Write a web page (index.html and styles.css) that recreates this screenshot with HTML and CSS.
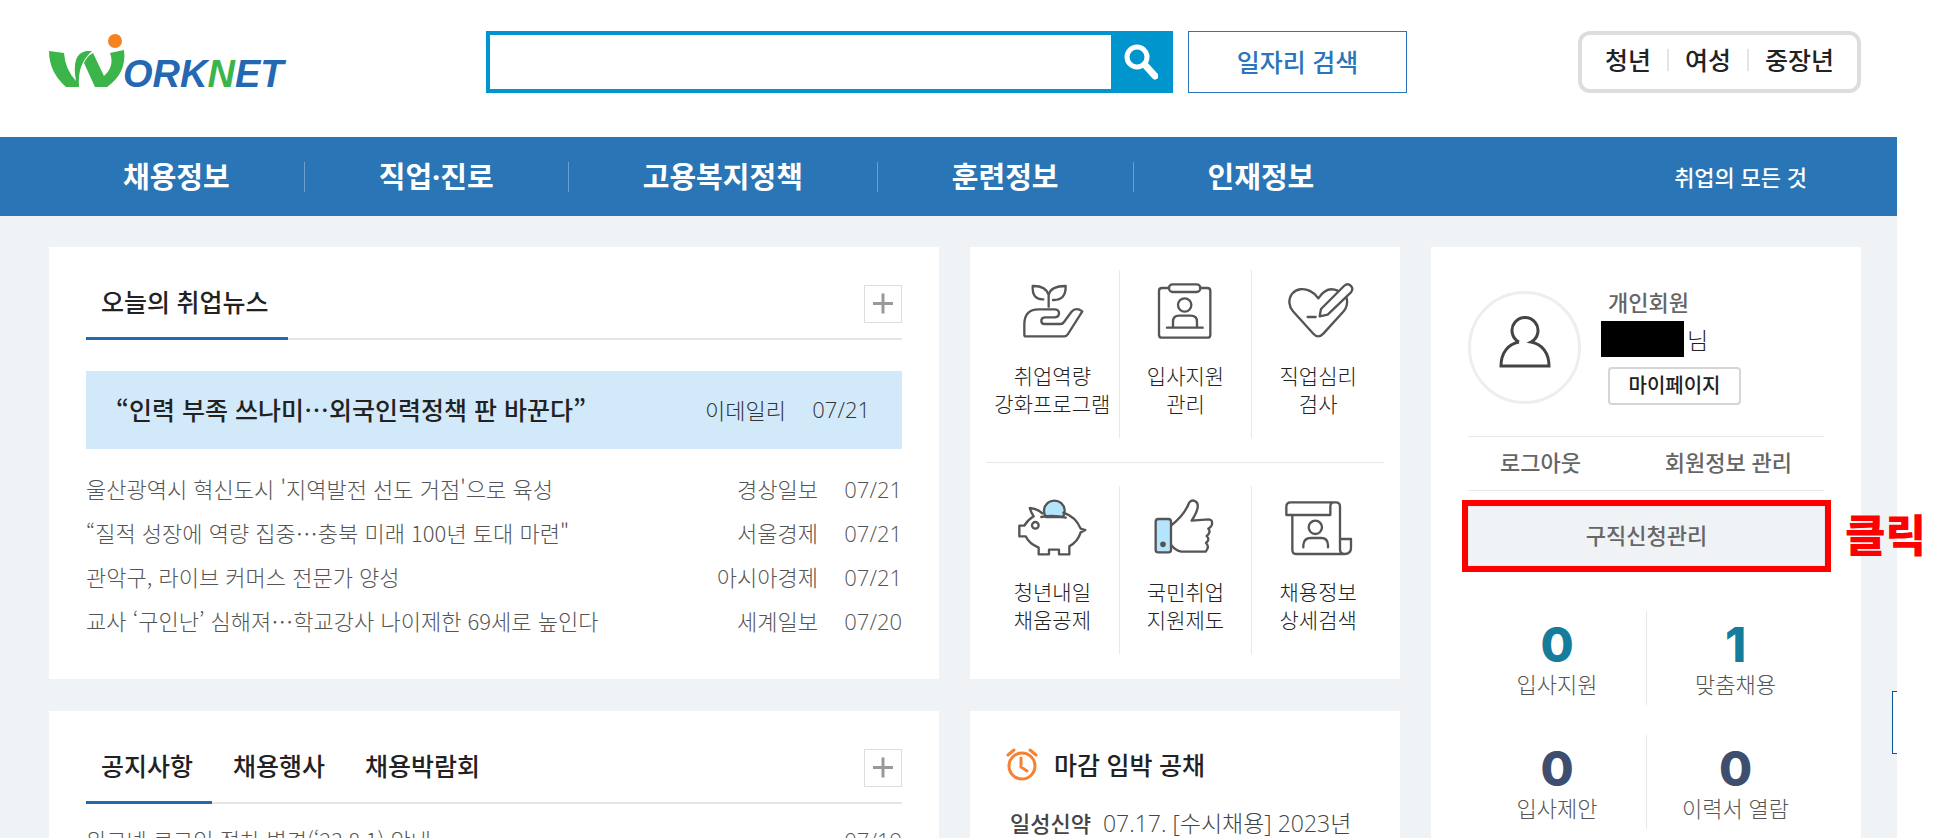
FILE: index.html
```html
<!DOCTYPE html>
<html lang="ko">
<head>
    <meta charset="utf-8">
    <title>워크넷</title>
    <link rel="stylesheet" href="styles.css">
</head>
<body>
    <header class="header">
        <a class="logo" href="#" aria-label="WORKNET">
            <svg width="240" height="60" viewBox="0 -2 240 60">
                <path fill="#3bb54a" d="M0 17 L15 19 Q16 35 27 47 Q22 20 37 17 L43 17 Q28 30 30 53 L17 53 Q0 38 0 17Z"/>
                <path fill="#3bb54a" d="M35 29 Q38 22 44 19 L55 42 Q66 32 61 19 L75 16 Q78 39 58 53 L46 53Z"/>
                <circle cx="66" cy="7" r="7" fill="#f58220"/>
                <text x="74" y="53" fill="#2468b3">ORK<tspan fill="#3bb54a">N</tspan>ET</text>
            </svg>
        </a>
        <form class="search">
            <input type="text" aria-label="검색어">
            <button type="button" aria-label="검색">
                <svg width="36" height="36" viewBox="0 0 36 36" fill="none" stroke="#fff">
                    <circle cx="15" cy="13" r="10" stroke-width="5"/>
                    <path d="M23 21 L33 32" stroke-width="7" stroke-linecap="round"/>
                </svg>
            </button>
        </form>
        <button type="button" class="job-search">일자리 검색</button>
        <div class="groups">
            <a href="#">청년</a>
            <a href="#">여성</a>
            <a href="#">중장년</a>
        </div>
    </header>

    <nav class="nav">
        <ul>
            <li><a href="#">채용정보</a></li>
            <li><a href="#">직업·진로</a></li>
            <li><a href="#">고용복지정책</a></li>
            <li><a href="#">훈련정보</a></li>
            <li><a href="#">인재정보</a></li>
        </ul>
        <a class="nav-all" href="#">취업의 모든 것</a>
    </nav>

    <main class="main">
        <section class="card news">
            <div class="card-head">
                <a class="tab active" href="#">오늘의 취업뉴스</a>
                <button type="button" class="more" aria-label="더보기"></button>
            </div>
            <a class="headline" href="#">
                <strong>“인력 부족 쓰나미⋯외국인력정책 판 바꾼다”</strong>
                <span class="source">이데일리</span>
                <span class="date">07/21</span>
            </a>
            <ul class="list">
                <li><a href="#">울산광역시 혁신도시 '지역발전 선도 거점'으로 육성</a><span class="source">경상일보</span><span class="date">07/21</span></li>
                <li><a href="#">“질적 성장에 역량 집중⋯충북 미래 100년 토대 마련"</a><span class="source">서울경제</span><span class="date">07/21</span></li>
                <li><a href="#">관악구, 라이브 커머스 전문가 양성</a><span class="source">아시아경제</span><span class="date">07/21</span></li>
                <li><a href="#">교사 ‘구인난’ 심해져⋯학교강사 나이제한 69세로 높인다</a><span class="source">세계일보</span><span class="date">07/20</span></li>
            </ul>
        </section>

        <section class="card services">
            <div class="service-row">
                <a href="#">
                    <svg viewBox="168 126 216 180">
                        <path d="M266 200 V165 Q258 137 218 138 Q216 180 250 178 M266 165 Q272 138 317 138 Q318 182 279 180"/>
                        <path d="M193 284 V250 Q195 208 235 208 H285 Q297 209 297 220 Q297 231 285 232 H254 Q244 233 244 242 Q244 252 254 252 H302 Q308 252 312 246 L334 216 Q347 200 367 214 L324 282 Q320 289 313 289 H198 Q193 289 193 284Z"/>
                    </svg>
                    취업역량<br>강화프로그램
                </a>
                <a href="#">
                    <svg viewBox="565 126 216 180">
                        <path d="M625 144 H604 Q595 144 595 153 V284 Q595 293 604 293 H740 Q749 293 749 284 V153 Q749 144 740 144 H718"/>
                        <rect x="625" y="133" width="94" height="23" rx="11"/>
                        <circle cx="672" cy="195" r="20"/>
                        <path d="M619 263 H726 M637 262 V245 Q637 227 655 227 H690 Q709 227 709 245 V262"/>
                    </svg>
                    입사지원<br>관리
                </a>
                <a href="#">
                    <svg viewBox="964 126 216 180">
                        <path d="M1131 152 Q1098 137 1073 175 C1045 133 986 140 986 188 Q987 202 997 214 L1058 281 Q1073 297 1088 281 L1149 214 Q1163 197 1158 174"/>
                        <path d="M1077 229 L1081 207 L1150 138 Q1161 128 1170 137 Q1180 147 1170 158 L1101 224Z M1041 231 H1065"/>
                    </svg>
                    직업심리<br>검사
                </a>
            </div>
            <div class="service-row">
                <a href="#">
                    <svg viewBox="168 147 216 180">
                        <path d="M258 204 A31 31 0 1 1 308 204Z" fill="#b3e5fc"/>
                        <path d="M244 204 Q280 196 317 206 M310 191 Q347 203 362 239 L376 243 L362 250 Q354 277 328 292 V316 H297 V302 H267 V316 H236 V296 Q207 284 197 262 H178 V230 H193 Q203 213 221 202 Q213 190 209 177 Q231 178 247 193"/>
                        <circle cx="226" cy="229" r="10"/>
                    </svg>
                    청년내일<br>채움공제
                </a>
                <a href="#">
                    <svg viewBox="565 147 216 180">
                        <rect x="585" y="210" width="46" height="100" rx="8" fill="#b3e5fc"/>
                        <circle cx="607" cy="286" r="5" fill="#555"/>
                        <path d="M632 229 Q672 197 685 162 Q692 150 704 157 Q723 168 693 215 L744 211 Q756 211 754 227 Q750 237 743 239 Q752 250 738 261 Q749 271 736 282 Q748 293 735 308 H662 Q645 305 632 289"/>
                    </svg>
                    국민취업<br>지원제도
                </a>
                <a href="#">
                    <svg viewBox="964 147 216 180">
                        <path d="M977 198 V173 Q977 160 990 160 H1126 Q1138 160 1138 173 V302 Q1139 315 1151 315 H1008 Q995 315 995 302 V198 M977 198 H1109 V173 Q1109 161 1119 160 M1138 270 H1171 V297 Q1171 315 1151 315"/>
                        <circle cx="1064" cy="235" r="20"/>
                        <path d="M1028 295 V288 Q1030 267 1050 267 H1082 Q1101 267 1102 288 V295"/>
                    </svg>
                    채용정보<br>상세검색
                </a>
            </div>
        </section>

        <aside class="card member">
            <div class="profile">
                <div class="avatar">
                    <svg width="52" height="52" viewBox="0 0 52 52">
                        <path d="M20 26 A13 13 0 1 1 32 26 C43 28 50 37 50 50 H2 C2 37 9 28 20 26"/>
                    </svg>
                </div>
                <div class="profile-info">
                    <span class="type">개인회원</span>
                    <div class="name"><i></i>님</div>
                    <button type="button" class="mypage">마이페이지</button>
                </div>
            </div>
            <div class="account">
                <a href="#">로그아웃</a>
                <a href="#">회원정보 관리</a>
            </div>
            <div class="apply">
                <button type="button">구직신청관리</button>
                <span class="click">클릭</span>
            </div>
            <div class="stats">
                <a href="#"><b>0</b>입사지원</a>
                <a href="#"><b>1</b>맞춤채용</a>
                <a class="dark" href="#"><b>0</b>입사제안</a>
                <a class="dark" href="#"><b>0</b>이력서 열람</a>
            </div>
        </aside>

        <section class="card notice">
            <div class="card-head">
                <a class="tab active" href="#">공지사항</a>
                <a class="tab" href="#">채용행사</a>
                <a class="tab" href="#">채용박람회</a>
                <button type="button" class="more" aria-label="더보기"></button>
            </div>
            <ul class="list">
                <li><a href="#">워크넷 로그인 절차 변경(‘23.8.1) 안내</a><span class="date">07/19</span></li>
            </ul>
        </section>

        <section class="card deadline">
            <h2>
                <svg width="32" height="34" viewBox="0 0 32 34">
                    <circle cx="16" cy="18" r="13"/>
                    <path d="M15 10 V19 L21 23 M2 7 L8 2 M30 7 L24 2"/>
                </svg>
                마감 임박 공채
            </h2>
            <p><strong>일성신약</strong> 07.17. [수시채용] 2023년</p>
        </section>

        <div class="side-tab"></div>
    </main>
</body>
</html>
```
FILE: styles.css
```css
* {
    box-sizing: border-box;
}
html, body {
    height: 100%;
    overflow: hidden;
}
body {
    margin: 0;
    padding-right: 55px;
    background: #fff;
    color: #222;
    font: 22px "Open Sans", "Noto Sans CJK KR", sans-serif;
    display: flex;
    flex-direction: column;
}
a {
    color: inherit;
    text-decoration: none;
}
ul {
    list-style: none;
    margin: 0;
    padding: 0;
}
button {
    font: inherit;
    padding: 0;
    background: #fff;
    cursor: pointer;
}

/* header */
.header {
    display: flex;
    align-items: center;
    flex-shrink: 0;
    height: 137px;
    padding: 0 36px 13px 49px;
}
.logo {
    width: 240px;
    margin-right: 197px;
}
.logo svg {
    display: block;
    overflow: visible;
}
.logo text {
    font: italic bold 38px "Liberation Sans", sans-serif;
}
.search {
    display: flex;
    flex: 1;
    height: 62px;
    border: 4px solid #0095cc;
}
.search input {
    flex: 1;
    min-width: 0;
    border: 0;
    padding: 0 16px;
    font: inherit;
    outline: none;
}
.search button {
    display: flex;
    align-items: center;
    justify-content: center;
    width: 58px;
    border: 0;
    background: #0095cc;
}
.job-search {
    width: 219px;
    height: 62px;
    margin: 0 171px 0 15px;
    border: 1px solid #2a75bb;
    color: #2a75bb;
    font-size: 25px;
    font-weight: 500;
    line-height: 56px;
}
.groups {
    display: flex;
    align-items: center;
    justify-content: center;
    width: 283px;
    height: 62px;
    padding-bottom: 4px;
    border: 4px solid #ddd;
    border-radius: 12px;
    font-size: 25px;
    font-weight: 500;
}
.groups a {
    padding: 0 16px;
    line-height: 22px;
}
.groups a + a {
    border-left: 2px solid #e5e5e5;
}

/* nav */
.nav {
    display: flex;
    align-items: center;
    justify-content: space-between;
    flex-shrink: 0;
    height: 79px;
    padding: 0 90px 0 49px;
    background: #2a75b5;
    color: #fff;
    font-weight: 500;
}
.nav ul {
    display: flex;
    font-size: 29px;
    font-weight: 700;
}
.nav li {
    padding: 0 74px;
    line-height: 30px;
}
.nav li + li {
    border-left: 1px solid #6a9fce;
}
.nav-all {
    font-size: 22px;
    line-height: 30px;
}

/* content */
.main {
    position: relative;
    flex: 1;
    min-height: 0;
    display: grid;
    grid-template-columns: 89fr 43fr 43fr;
    grid-template-rows: 432px auto;
    gap: 32px 31px;
    padding: 31px 36px 0 49px;
    background: #eff3f6;
}
.card {
    background: #fff;
}
.news, .notice {
    padding: 0 37px;
}
.card-head {
    position: relative;
    display: flex;
    height: 93px;
    padding-top: 18px;
    border-bottom: 2px solid #e5e5e5;
}
.tab {
    height: 75px;
    padding: 0 19px 0 15px;
    margin-right: 6px;
    font-size: 25px;
    font-weight: 500;
    line-height: 74px;
}
.tab.active {
    border-bottom: 3px solid #1e6bb0;
}
.more {
    position: relative;
    width: 38px;
    height: 38px;
    margin: 20px 0 0 auto;
    border: 1px solid #ddd;
}
.more::before,
.more::after {
    content: "";
    position: absolute;
    top: 16px;
    left: 8px;
    width: 20px;
    height: 3px;
    background: #999;
}
.more::after {
    transform: rotate(90deg);
}
.headline {
    display: flex;
    align-items: center;
    height: 78px;
    margin: 31px 0 17px;
    padding: 0 32px 3px 30px;
    background: #d2e9f9;
    color: #333;
}
.headline strong {
    margin-right: auto;
    color: #222;
    font-family: "Noto Sans CJK KR", sans-serif;
    font-size: 25px;
    font-weight: 500;
}
.list {
    color: #555;
    font-family: "Noto Sans CJK KR", sans-serif;
    font-weight: 300;
}
.headline .source,
.headline .date {
    font-weight: 300;
}
.list li {
    display: flex;
    align-items: baseline;
    height: 44px;
    line-height: 44px;
}
.list a {
    margin-right: auto;
}
.date {
    width: 60px;
    margin-left: 24px;
    font-family: "Open Sans", sans-serif;
    text-align: right;
}
.notice .list {
    padding-top: 13px;
}

/* shortcuts */
.services {
    padding: 0 16px;
}
.service-row {
    display: grid;
    grid-template-columns: repeat(3, 1fr);
    padding: 23px 0 24px;
}
.service-row + .service-row {
    border-top: 1px solid #e8e8e8;
}
.service-row a {
    height: 168px;
    padding-top: 12px;
    font-size: 21px;
    font-weight: 300;
    line-height: 28px;
    text-align: center;
    white-space: nowrap;
}
.service-row a + a {
    border-left: 1px solid #e8e8e8;
}
.service-row svg {
    display: block;
    width: 72px;
    height: 60px;
    margin: 0 auto 20px;
    fill: none;
    stroke: #555;
    stroke-width: 7;
    stroke-linejoin: round;
    stroke-linecap: round;
}

/* member box */
.member {
    grid-column: 3;
    grid-row: 1 / 3;
    padding: 44px 37px 0;
}
.profile {
    display: flex;
    height: 145px;
}
.avatar {
    display: flex;
    align-items: center;
    justify-content: center;
    width: 113px;
    height: 113px;
    padding-bottom: 12px;
    border: 3px solid #eee;
    border-radius: 50%;
}
.avatar svg {
    fill: none;
    stroke: #444;
    stroke-width: 3;
}
.profile-info {
    padding-left: 27px;
}
.type {
    display: block;
    height: 30px;
    color: #666;
    font-weight: 500;
    line-height: 22px;
}
.name {
    display: flex;
    align-items: center;
    height: 36px;
    margin-left: -7px;
    font-size: 23px;
    font-weight: 300;
    gap: 3px;
}
.name i {
    width: 83px;
    height: 36px;
    background: #000;
}
.mypage {
    width: 133px;
    height: 38px;
    margin-top: 10px;
    border: 2px solid #d5d5d5;
    border-radius: 4px;
    color: #222;
    font-size: 20px;
    font-weight: 500;
    line-height: 30px;
}
.account {
    display: flex;
    justify-content: space-between;
    height: 55px;
    padding: 0 32px;
    border: solid #e8e8e8;
    border-width: 1px 0;
    color: #666;
    font-weight: 500;
    line-height: 50px;
}
.apply {
    position: relative;
    margin: 9px -7px 0 -6px;
    border: 6px solid #f00;
}
.apply button {
    display: block;
    width: 100%;
    height: 60px;
    padding-bottom: 4px;
    border: 1px solid #e3e7ea;
    background: #eff3f6;
    color: #666;
    font-weight: 500;
}
.click {
    position: absolute;
    top: 0;
    left: 100%;
    padding-left: 20px;
    color: #f00;
    font-size: 44px;
    font-weight: 900;
    line-height: 58px;
    white-space: nowrap;
}
.stats {
    display: grid;
    grid-template-columns: 1fr 1fr;
    row-gap: 30px;
    margin-top: 39px;
}
.stats a {
    height: 94px;
    color: #555;
    font-weight: 300;
    line-height: 30px;
    text-align: center;
}
.stats a:nth-child(even) {
    border-left: 1px solid #e8e8e8;
}
.stats b {
    display: block;
    padding-top: 10px;
    color: #167c9b;
    font: 800 48px/48px Inter, sans-serif;
}
.stats .dark b {
    color: #3e4e6e;
}

/* deadline */
.deadline {
    padding: 34px 36px 0;
}
.deadline h2 {
    display: flex;
    align-items: center;
    gap: 16px;
    margin: 0;
    font-size: 25px;
    font-weight: 500;
    line-height: 40px;
}
.deadline svg {
    fill: none;
    stroke: #f58233;
    stroke-width: 3;
    stroke-linecap: round;
}
.deadline p {
    margin: 18px 0 0;
    padding-left: 4px;
    color: #444;
    font-size: 23px;
    font-weight: 300;
    line-height: 40px;
    white-space: nowrap;
}
.deadline strong {
    margin-right: 6px;
    font-size: 22px;
    font-weight: 500;
}
.side-tab {
    position: absolute;
    top: 475px;
    right: 0;
    width: 5px;
    height: 63px;
    border: 1px solid #0a5299;
    border-right: 0;
    background: #fff;
}
```
